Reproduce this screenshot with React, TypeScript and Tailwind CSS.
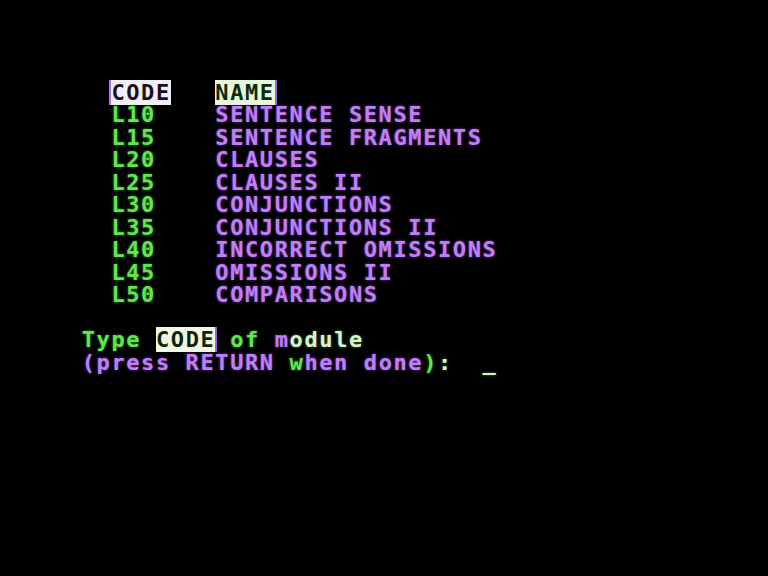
const green = "text-[#5fe84a] [text-shadow:0_0_3px_rgba(95,232,74,0.55)]";
const purple = "text-[#c27dff] [text-shadow:0_0_3px_rgba(194,125,255,0.55)]";
const pale = "text-[#d8f5c8] [text-shadow:0_0_3px_rgba(180,240,160,0.5)]";

const modules: [string, string][] = [
  ["L10", "SENTENCE SENSE"],
  ["L15", "SENTENCE FRAGMENTS"],
  ["L20", "CLAUSES"],
  ["L25", "CLAUSES II"],
  ["L30", "CONJUNCTIONS"],
  ["L35", "CONJUNCTIONS II"],
  ["L40", "INCORRECT OMISSIONS"],
  ["L45", "OMISSIONS II"],
  ["L50", "COMPARISONS"],
];

function Row({ children }: { children?: React.ReactNode }) {
  return <div className="h-[22.5px] whitespace-pre leading-[22.5px]">{children}</div>;
}

export default function App() {
  return (
    <div
      className="h-[576px] w-[768px] overflow-hidden bg-black pl-[52px] pt-[14px] text-[22px] font-bold tracking-[1.6px]"
      style={{ fontFamily: '"DejaVu Sans Mono", "Liberation Mono", monospace' }}
    >
      <Row />
      <Row />
      <Row />
      <Row>
        {"    "}
        <span className="bg-[#f2eef6] text-[#1a0f22] shadow-[-2px_0_0_#b070f0]">CODE</span>
        {"   "}
        <span className="bg-[#e6f8dc] text-[#0f2a0a] shadow-[2px_0_0_#a060e0]">NAME</span>
      </Row>
      {modules.map(([code, name]) => (
        <Row key={code}>
          {"    "}
          <span className={green}>{code}</span>
          {"    "}
          <span className={purple}>{name}</span>
        </Row>
      ))}
      <Row />
      <Row>
        {"  "}
        <span className={green}>Type</span>{" "}
        <span className="bg-[#eef8e4] text-[#10240c] shadow-[2px_0_0_#a060e0]">CODE</span>{" "}
        <span className={green}>of </span>
        <span className={purple}>m</span>
        <span className={pale}>odule</span>
      </Row>
      <Row>
        {"  "}
        <span className={purple}>(press RETURN </span>
        <span className={green}>w</span>
        <span className={purple}>hen done</span>
        <span className={green}>)</span>
        <span className={pale}>:</span>
        {"  "}
        <span className={pale}>_</span>
      </Row>
    </div>
  );
}
